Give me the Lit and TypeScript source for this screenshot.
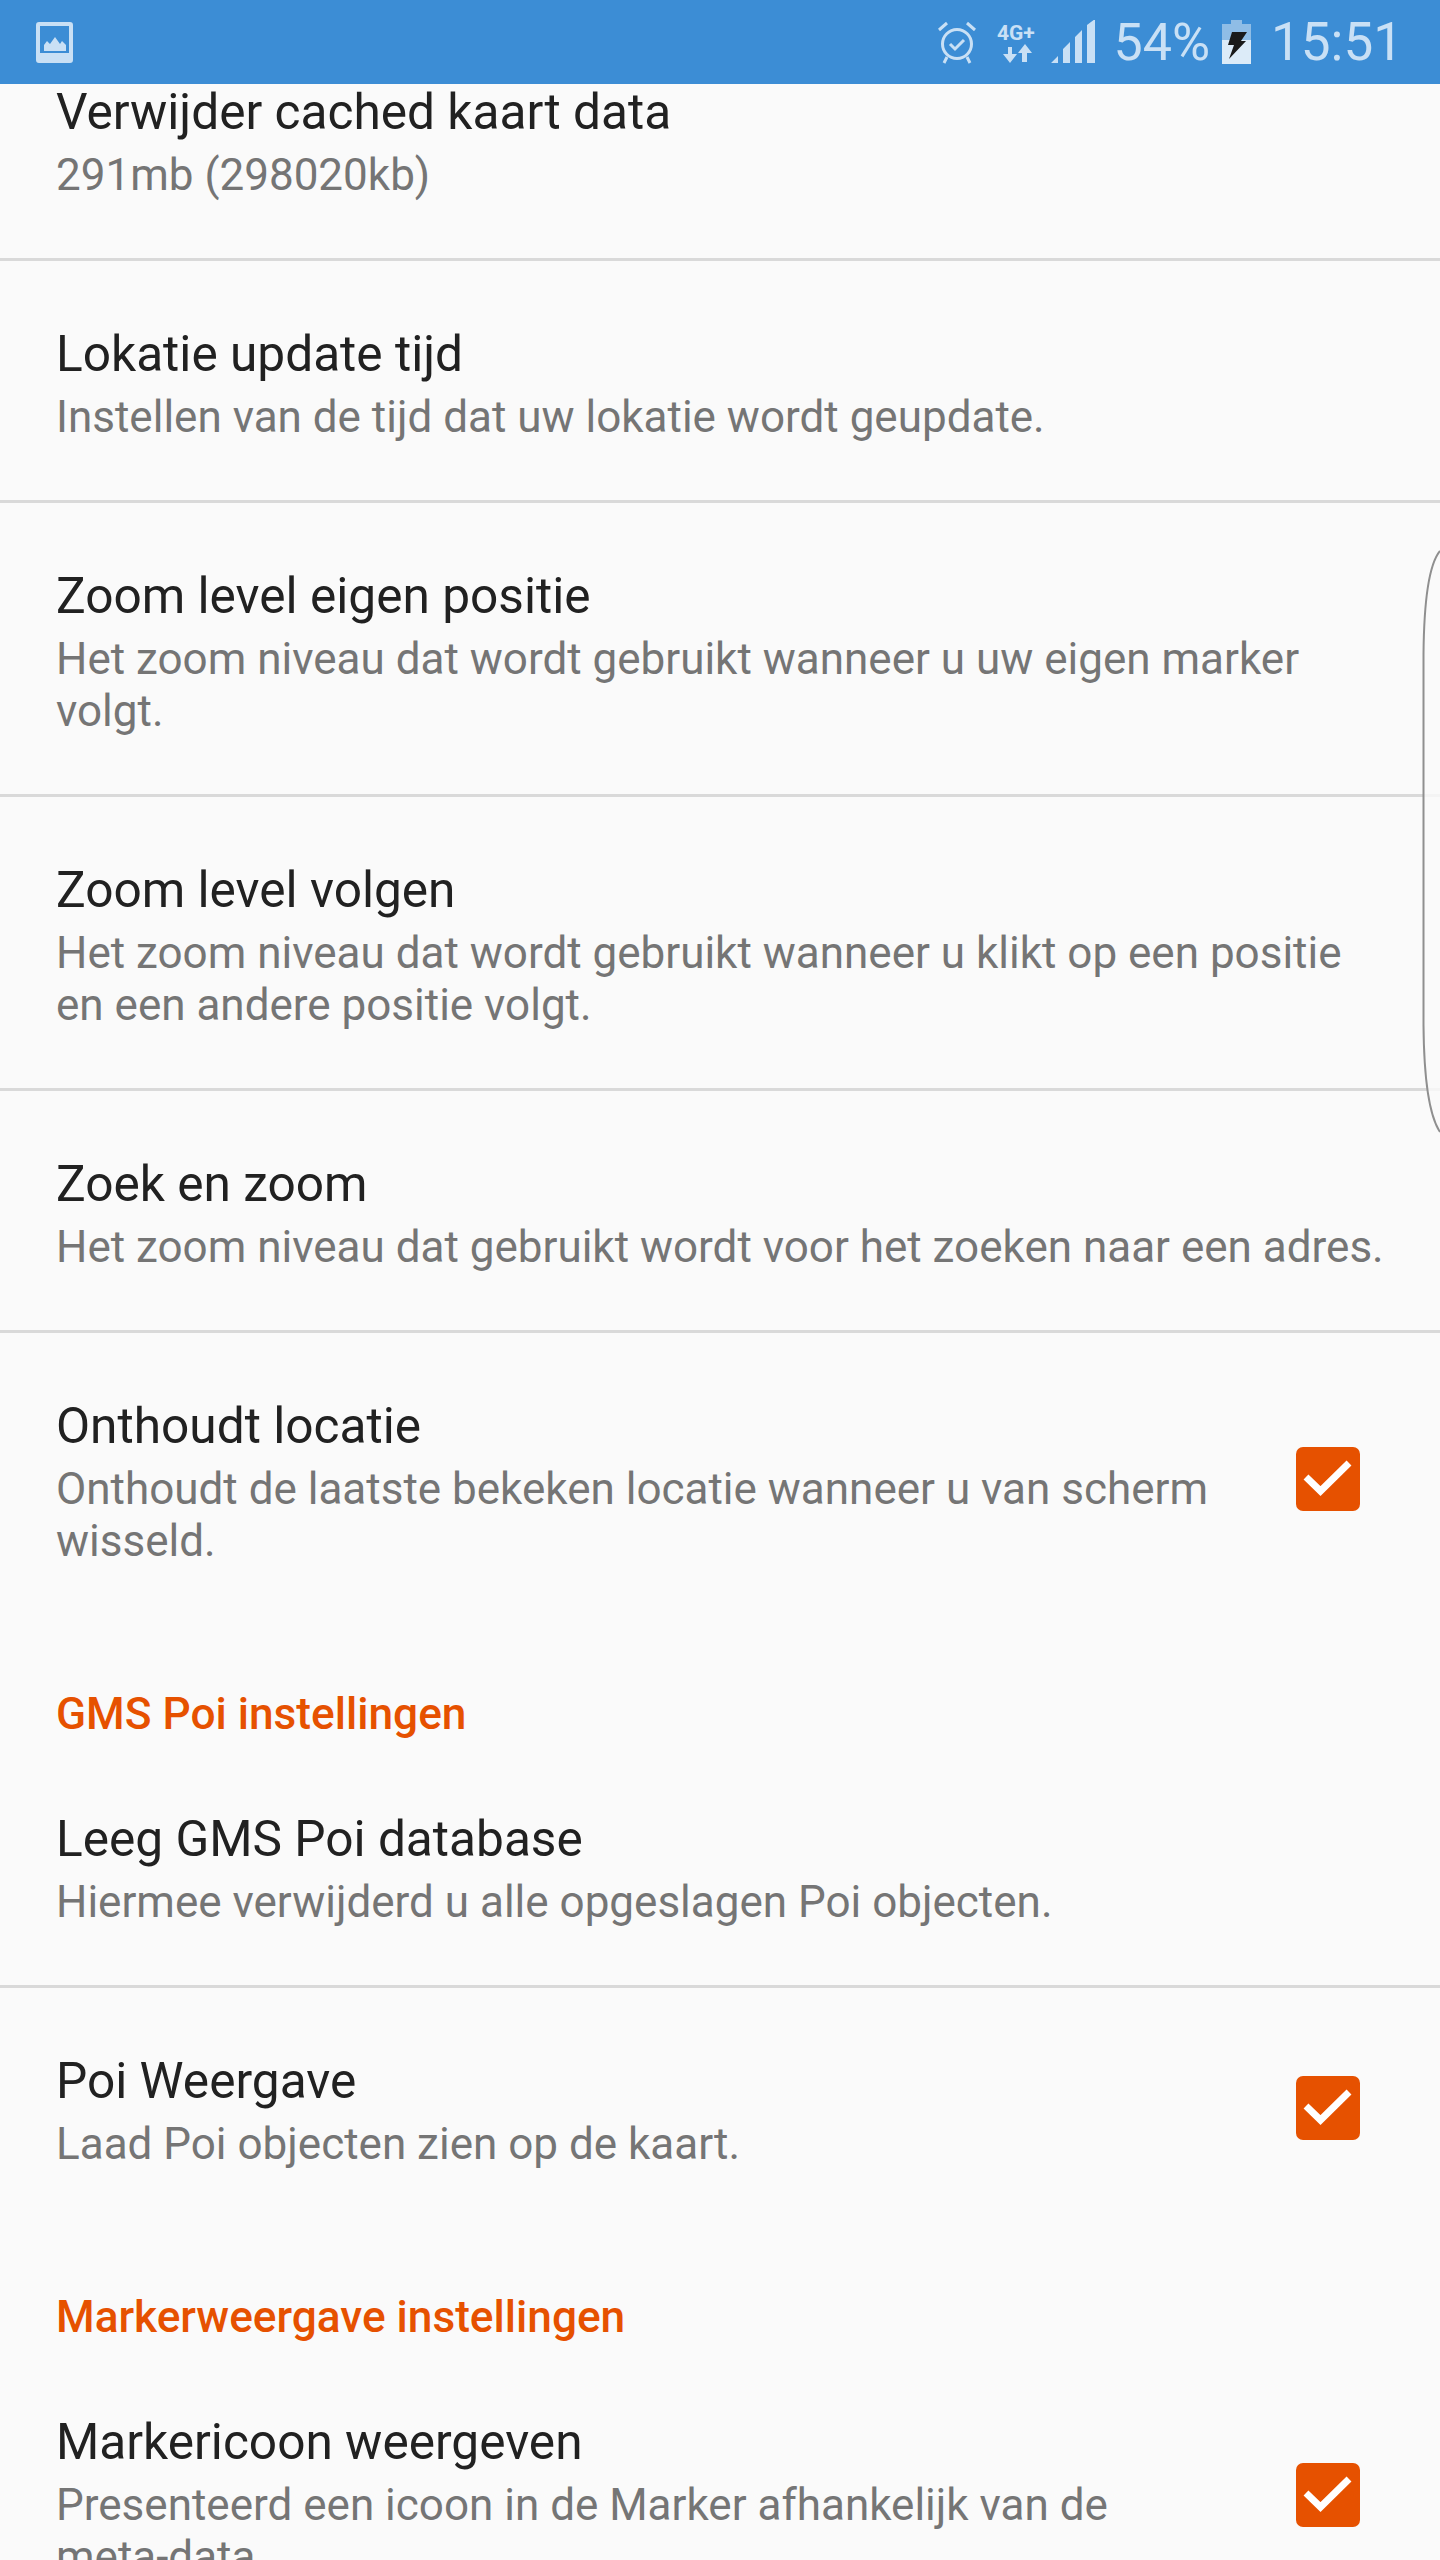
import { LitElement, html, css, svg, nothing } from 'lit';
import { customElement } from 'lit/decorators.js';

type Row = { title: string; sub: string; check?: boolean; last?: boolean };
type Section = { header?: string; rows: Row[] };

const sections: Section[] = [
  {
    rows: [
      { title: 'Verwijder cached kaart data', sub: '291mb (298020kb)' },
      { title: 'Lokatie update tijd', sub: 'Instellen van de tijd dat uw lokatie wordt geupdate.' },
      { title: 'Zoom level eigen positie', sub: 'Het zoom niveau dat wordt gebruikt wanneer u uw eigen marker volgt.' },
      { title: 'Zoom level volgen', sub: 'Het zoom niveau dat wordt gebruikt wanneer u klikt op een positie en een andere positie volgt.' },
      { title: 'Zoek en zoom', sub: 'Het zoom niveau dat gebruikt wordt voor het zoeken naar een adres.' },
      { title: 'Onthoudt locatie', sub: 'Onthoudt de laatste bekeken locatie wanneer u van scherm wisseld.', check: true, last: true },
    ],
  },
  {
    header: 'GMS Poi instellingen',
    rows: [
      { title: 'Leeg GMS Poi database', sub: 'Hiermee verwijderd u alle opgeslagen Poi objecten.' },
      { title: 'Poi Weergave', sub: 'Laad Poi objecten zien op de kaart.', check: true, last: true },
    ],
  },
  {
    header: 'Markerweergave instellingen',
    rows: [
      { title: 'Markericoon weergeven', sub: 'Presenteerd een icoon in de Marker afhankelijk van de meta\u2011data.', check: true, last: true },
    ],
  },
];

const checkIcon = svg`<svg width="64" height="64" viewBox="0 0 64 64">
  <rect width="64" height="64" rx="7" fill="#e65100"/>
  <path d="M10 30 L24.500 44 L53 16" fill="none" stroke="#fff" stroke-width="7"/>
</svg>`;

@customElement('app-root')
export class AppRoot extends LitElement {
  static styles = css`
    :host {
      display: block;
      position: relative;
      width: 1440px;
      height: 2560px;
      overflow: hidden;
      background: #fafafa;
      font-family: Roboto, sans-serif;
    }

    .status {
      position: relative;
      z-index: 1;
      height: 84px;
      background: #3c8dd5;
      display: flex;
      align-items: center;
      padding: 0 37px 0 36px;
      color: #c9e0f5;
    }

    .status .spacer {
      flex: 1;
    }

    .status svg {
      display: block;
    }

    .pct {
      font-size: 52px;
      margin: 0 12px 0 18px;
    }

    .time {
      font-size: 53px;
      margin-left: 20px;
    }

    .net {
      margin-left: 21px;
      margin-right: 11px;
    }

    .list {
      margin-top: -65px;
    }

    .header {
      color: #e65100;
      font-size: 44.2px;
      font-weight: 500;
      line-height: 52px;
      padding: 0 56px;
      margin-top: 64px;
      margin-bottom: 6px;
    }

    .row {
      display: flex;
      align-items: center;
      padding: 62px 80px 57px 56px;
      border-bottom: 3px solid #d9d9d9;
    }

    .row.last {
      border-bottom: none;
    }

    .text {
      flex: 1;
      min-width: 0;
    }

    .title {
      font-size: 49.6px;
      line-height: 62px;
      margin-bottom: 6px;
      color: #212121;
    }

    .sub {
      font-size: 44px;
      line-height: 52px;
      color: #757575;
    }

    .row.plain {
      padding-right: 55px;
    }

    .row.checked .text {
      padding-right: 60px;
    }

    .check {
      flex: none;
    }

    .edge {
      position: absolute;
      top: 545px;
      right: 0;
    }
  `;

  renderRow(row: Row) {
    const cls = `row ${row.last ? 'last' : ''} ${row.check ? 'checked' : 'plain'}`;
    return html`<div class=${cls}>
      <div class="text">
        <div class="title">${row.title}</div>
        <div class="sub">${row.sub}</div>
      </div>
      ${row.check ? html`<div class="check">${checkIcon}</div>` : nothing}
    </div>`;
  }

  render() {
    return html`
      <div class="status">
        <svg width="37" height="41" viewBox="0 0 37 41">
          <path fill="#c9e0f5" fill-rule="evenodd" d="M3 0h31a3 3 0 0 1 3 3v35a3 3 0 0 1-3 3H3a3 3 0 0 1-3-3V3a3 3 0 0 1 3-3zM4 4v27h29V4z"/>
          <path fill="#c9e0f5" d="M8 29v-6l3-4 3 3 5-7 5 7 2-3 4 4v6z"/>
        </svg>
        <span class="spacer"></span>
        <svg width="38" height="43" viewBox="0 0 38 43" fill="none" stroke="#c9e0f5">
          <circle cx="19" cy="23" r="14.5" stroke-width="3"/>
          <path d="M12 23l5 5 9-9" stroke-width="3"/>
          <path d="M1 9l8-7M37 9l-8-7M9 36l-3 6M29 36l3 6" stroke-width="3"/>
        </svg>
        <svg class="net" width="43" height="43" viewBox="0 0 43 43">
          <text x="0" y="19" font-family="Roboto, sans-serif" font-weight="700" font-size="21" fill="#c9e0f5">4G+</text>
          <path fill="#c9e0f5" d="M11 26h4v7h5l-7 9-7-9h5zM25 41v-9h-4l7-9 7 9h-5v9z"/>
        </svg>
        <svg width="44" height="44" viewBox="0 0 44 44">
          <path fill="#c9e0f5" d="M0 43l7-7v7zM12 43V29l7-7v21zM24 43V17l7-7v33zM36 43V5l8-6v44z"/>
        </svg>
        <span class="pct">54%</span>
        <svg width="29" height="44" viewBox="0 0 29 44">
          <path fill="#8fbde6" d="M9 0h11v4h9v20H0V4h9z"/>
          <rect y="20" width="29" height="24" fill="#dcebf8"/>
          <path fill="#1a1a1a" d="M10 12h15l-6 9h5L7 39l5-14H6z"/>
        </svg>
        <span class="time">15:51</span>
      </div>
      <div class="list">
        ${sections.map(
          s => html`${s.header ? html`<div class="header">${s.header}</div>` : nothing}
          ${s.rows.map(r => this.renderRow(r))}`
        )}
      </div>
      <svg class="edge" width="18" height="590" viewBox="0 0 18 590">
        <path d="M18 6C8 18 2 50 1.5 110V480C2 540 8 572 18 587" fill="#fafafa" fill-opacity=".8" stroke="#8f8f8f" stroke-width="2"/>
      </svg>
    `;
  }
}
